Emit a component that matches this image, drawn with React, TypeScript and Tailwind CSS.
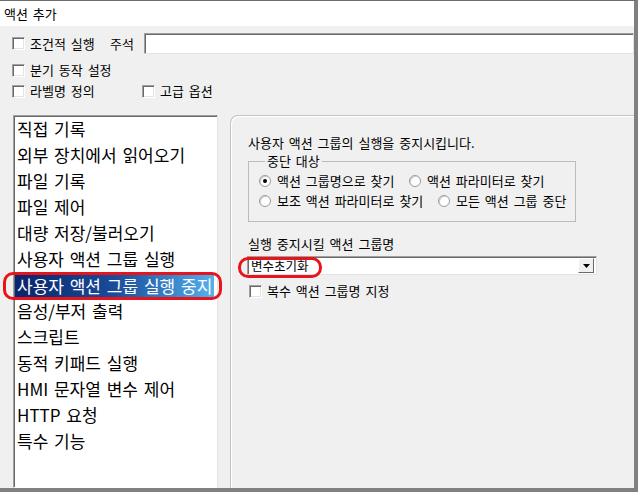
import React from "react";

const listItems = [
  "직접 기록",
  "외부 장치에서 읽어오기",
  "파일 기록",
  "파일 제어",
  "대량 저장/불러오기",
  "사용자 액션 그룹 실행",
  "사용자 액션 그룹 실행 중지",
  "음성/부저 출력",
  "스크립트",
  "동적 키패드 실행",
  "HMI 문자열 변수 제어",
  "HTTP 요청",
  "특수 기능",
];

const SELECTED = 6;

function Checkbox() {
  return (
    <span className="inline-block w-[13px] h-[13px] shrink-0 bg-white border border-t-[#a0a0a0] border-l-[#a0a0a0] border-b-white border-r-white shadow-[inset_1px_1px_0_#696969,inset_-1px_-1px_0_#e3e3e3]" />
  );
}

function Radio({ checked }: { checked?: boolean }) {
  return (
    <span className="inline-flex w-[12px] h-[12px] shrink-0 items-center justify-center rounded-full bg-white border border-[#9a9a9a] shadow-[inset_1px_1px_0_#d0d0d0]">
      {checked && <span className="w-[4px] h-[4px] rounded-full bg-black" />}
    </span>
  );
}

export default function App() {
  return (
    <div className="relative w-[638px] h-[492px] overflow-hidden bg-[#f0f0f0] border-t border-t-[#6d6d6d] border-r-4 border-r-[#808080] border-b-4 border-b-[#808080] flex flex-col text-[13px] leading-[14px] [word-spacing:2px] text-black font-['Noto_Sans_CJK_KR','Noto_Sans',sans-serif]">
      {/* title bar */}
      <div className="h-[25px] shrink-0 bg-white flex items-center pl-[4px]">액션 추가</div>

      {/* body */}
      <div className="flex-1 min-h-0 flex flex-col pt-[7px]">
        {/* row 1 */}
        <div className="h-[21px] flex items-center pl-[12px]">
          <div className="w-[98px] flex items-center gap-[5px]">
            <Checkbox />
            <span>조건적 실행</span>
          </div>
          <span className="w-[34px]">주석</span>
          <div className="flex-1 h-[21px] bg-white border border-t-[#a0a0a0] border-l-[#a0a0a0] border-b-[#e3e3e3] border-r-[#e3e3e3] shadow-[inset_1px_1px_0_#696969]" />
        </div>

        {/* row 2 */}
        <div className="mt-[8px] h-[16px] flex items-center pl-[12px] gap-[5px]">
          <Checkbox />
          <span>분기 동작 설정</span>
        </div>

        {/* row 3 */}
        <div className="mt-[5px] h-[16px] flex items-center pl-[12px]">
          <div className="w-[130px] flex items-center gap-[5px]">
            <Checkbox />
            <span>라벨명 정의</span>
          </div>
          <div className="flex items-center gap-[5px]">
            <Checkbox />
            <span>고급 옵션</span>
          </div>
        </div>

        {/* main area */}
        <div className="mt-[16px] flex-1 min-h-0 flex">
          {/* action list */}
          <div className="ml-[13px] w-[205px] bg-white border border-t-[#a0a0a0] border-l-[#a0a0a0] border-b-white border-r-[#e3e3e3] shadow-[inset_1px_1px_0_#696969] pl-[1px] text-[17px] leading-[26px] whitespace-nowrap">
            {listItems.map((item, i) =>
              i === SELECTED ? (
                <div key={item} className="h-[26px] pt-[2px] pr-[3px]">
                  <div className="h-[23px] leading-[23px] pl-[2px] text-white bg-gradient-to-r from-[#0a246a] via-[#1a4c9a] to-[#56b0ee]">
                    {item}
                  </div>
                </div>
              ) : (
                <div key={item} className="h-[26px] pl-[2px]">
                  {item}
                </div>
              )
            )}
          </div>

          {/* property panel */}
          <div className="ml-[12px] flex-1 rounded-tl-[8px] border-t border-l border-[#c4c4c4] shadow-[inset_1px_1px_0_#ffffff] pl-[17px] pt-[20px] flex flex-col items-start">
            <div>사용자 액션 그룹의 실행을 중지시킵니다.</div>

            <fieldset className="mt-[4px] w-[328px] border border-[#bcbcbc] pl-[10px] pb-[13px]">
              <legend className="ml-[6px] px-[2px] leading-[14px]">중단 대상</legend>
              <div className="mt-[6px] h-[14px] flex items-center">
                <div className="w-[150px] flex items-center gap-[6px]">
                  <Radio checked />
                  <span>액션 그룹명으로 찾기</span>
                </div>
                <div className="flex items-center gap-[6px]">
                  <Radio />
                  <span>액션 파라미터로 찾기</span>
                </div>
              </div>
              <div className="mt-[6px] h-[14px] flex items-center">
                <div className="w-[179px] flex items-center gap-[6px]">
                  <Radio />
                  <span>보조 액션 파라미터로 찾기</span>
                </div>
                <div className="flex items-center gap-[6px]">
                  <Radio />
                  <span>모든 액션 그룹 중단</span>
                </div>
              </div>
            </fieldset>

            <div className="mt-[15px]">실행 중지시킬 액션 그룹명</div>

            <div className="mt-[5px] ml-[-1px] w-[350px] h-[19px] bg-white border border-t-[#a0a0a0] border-l-[#a0a0a0] border-b-[#e3e3e3] border-r-[#e3e3e3] shadow-[inset_1px_1px_0_#696969] flex items-center pl-[3px] pr-[2px]">
              <span className="flex-1 text-[12.5px]">변수초기화</span>
              <span className="w-[16px] h-[15px] bg-[#f0f0f0] border border-t-white border-l-white border-b-[#696969] border-r-[#696969] flex items-center justify-center">
                <svg width="7" height="4" viewBox="0 0 7 4">
                  <path d="M0 0H7L3.5 4Z" fill="#000" />
                </svg>
              </span>
            </div>

            <div className="mt-[9px] ml-[1px] h-[14px] flex items-center gap-[5px]">
              <Checkbox />
              <span>복수 액션 그룹명 지정</span>
            </div>
          </div>
        </div>
      </div>

      {/* red annotation marks */}
      <div className="absolute left-[3px] top-[271px] w-[219px] h-[28px] border-[3px] border-[#e8141c] rounded-[10px] pointer-events-none" />
      <div className="absolute left-[238px] top-[256px] w-[84px] h-[21px] border-[3px] border-[#e8141c] rounded-[10px] pointer-events-none" />
    </div>
  );
}
